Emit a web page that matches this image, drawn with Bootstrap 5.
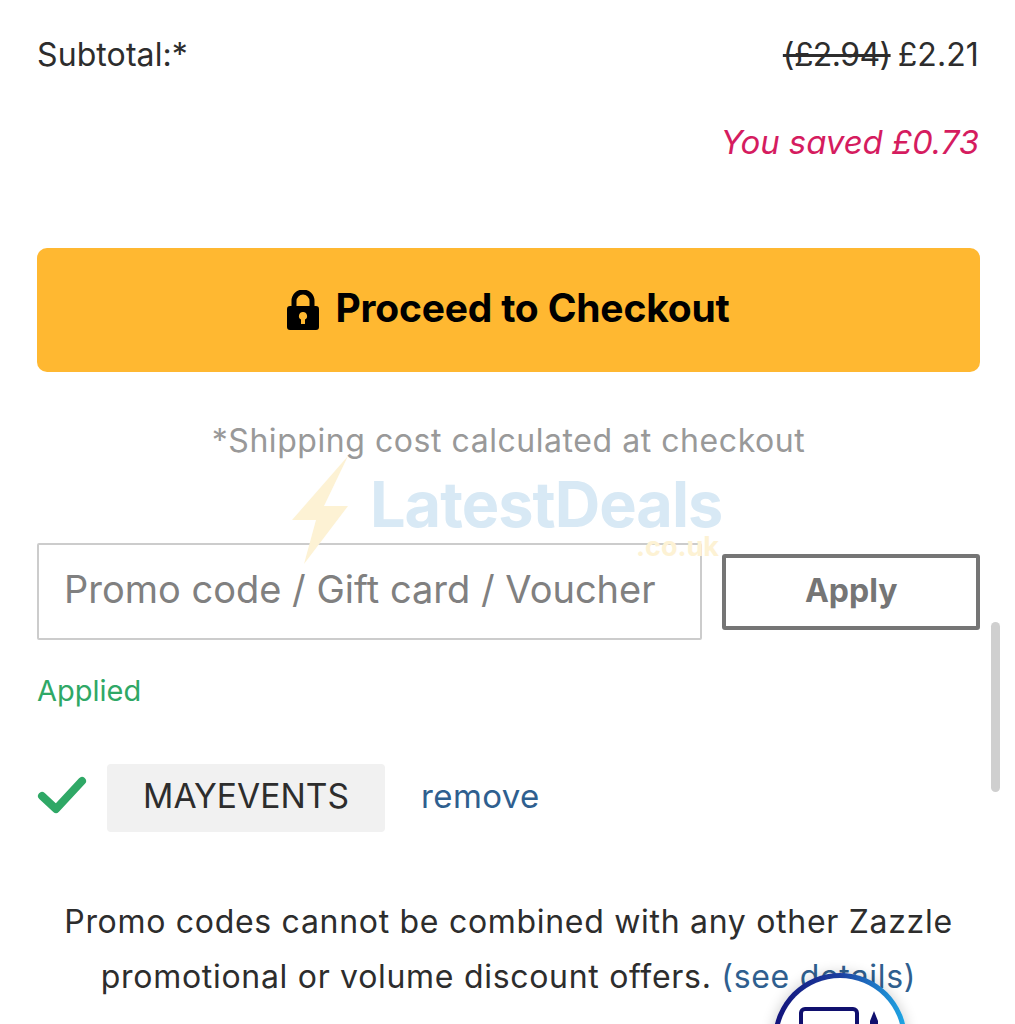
<!DOCTYPE html>
<html lang="en">
<head>
  <meta charset="UTF-8" />
  <meta name="viewport" content="width=device-width, initial-scale=1" />
  <title>Cart summary</title>
  <link href="https://cdn.jsdelivr.net/npm/bootstrap@5.3.0/dist/css/bootstrap.min.css" rel="stylesheet" />
  <style>
    html, body { height: 1024px; overflow: hidden; }
    body { font-family: "Inter", "Liberation Sans", sans-serif; color: #2d2d2d; background: #fff; font-size: 32px; }
    .cart-wrap { padding: 34px 35px 0 37px; width: 1015px; height: 1024px; position: relative; overflow: hidden; }
    .sum-row { line-height: 42px; letter-spacing: .1px; margin-right: 1px; }
    .old-price { text-decoration: line-through; letter-spacing: -.6px; margin-right: -2px; }
    .saved-line { color: #d51c5f; font-size: 33px; font-style: italic; margin-top: 45px; margin-right: 1px; line-height: 42px; text-align: right; letter-spacing: -.1px; }
    .checkout-btn { height: 124px; margin-top: 85px; background: #ffb831; border: 0; border-radius: 10px; color: #000; font-weight: 700; font-size: 39px; letter-spacing: -.2px; }
    .checkout-btn:hover, .checkout-btn:active { background: #ffb831; color: #000; }
    .checkout-label { padding-bottom: 4px; }
    .ship-note { color: #999; font-size: 32px; text-align: center; line-height: 40px; margin-top: 49px; letter-spacing: .55px; }
    .promo-row { margin-top: 82px; gap: 20px; }
    .promo-input { width: 666px; height: 97px; border: 2px solid #ccc; border-radius: 2px; font-size: 38px; padding: 0 25px 5px; color: #777; }
    .promo-input::placeholder { color: #808080; opacity: 1; }
    .apply-btn { width: 258px; height: 76px; border: 4px solid #757575; border-radius: 3px; background: #fff; color: #757575; font-weight: 700; font-size: 32px; padding: 0 0 2px; }
    .applied-label { color: #2fa866; font-size: 29px; line-height: 36px; margin-top: 33px; }
    .code-row { margin-top: 55px; }
    .check-icon { margin-bottom: 6px; }
    .code-chip { background: #f1f1f1; border-radius: 4px; width: 278px; height: 68px; margin-left: 20px; padding-bottom: 3px; font-size: 33.600px; color: #2d2d2d; }
    .remove-link { color: #2f5f8f; margin: 0 0 2px 36px; text-decoration: none; font-size: 33px; letter-spacing: .4px; }
    .promo-terms { text-align: center; font-size: 32px; line-height: 55px; margin-top: 62px; letter-spacing: .7px; }
    .promo-terms a { color: #2f5f8f; text-decoration: none; }
    .wm-logo { position: absolute; left: 292px; top: 456px; width: 440px; height: 110px; pointer-events: none; }
    .wm-name { position: absolute; left: 78px; top: 20px; font-size: 63px; line-height: 56px; font-weight: 700; color: #d8e9f5; letter-spacing: -1px; }
    .wm-tld { position: absolute; left: 344px; top: 77px; font-size: 27px; line-height: 28px; color: #fdf2d4; font-weight: 700; }
    .scroll-thumb { position: absolute; left: 991px; top: 622px; width: 9px; height: 170px; background: #cfcfcf; border-radius: 5px; }
    .chat-fab { position: absolute; left: 773px; top: 973px; width: 134px; height: 134px; border-radius: 50%; padding: 5px; background: linear-gradient(90deg, #12127a 0%, #1c3fa0 50%, #1fa9e6 100%); box-shadow: 0 0 14px rgba(0,0,0,.2); }
    .chat-inner { background: #fff; border-radius: 50%; width: 100%; height: 100%; padding: 29px 0 0 16px; }
    .chat-inner svg { display: block; }
  </style>
</head>
<body>
  <div class="cart-wrap">

    <div class="sum-row d-flex justify-content-between">
      <span>Subtotal:*</span>
      <span><span class="old-price">(£2.94)</span> £2.21</span>
    </div>
    <div class="saved-line">You saved £0.73</div>

    <button class="btn checkout-btn w-100 d-flex align-items-center justify-content-center gap-3" type="button">
      <svg width="32" height="40" viewBox="0 0 32 40" aria-hidden="true">
        <path d="M7 17V11a9 9 0 0 1 18 0v6" fill="none" stroke="#000" stroke-width="5"/>
        <path fill="#000" fill-rule="evenodd" d="M3 16h26a3 3 0 0 1 3 3v18a3 3 0 0 1-3 3H3a3 3 0 0 1-3-3V19a3 3 0 0 1 3-3zm13 6a4 4 0 0 0-2 7.500V34h4v-4.500A4 4 0 0 0 16 22z"/>
      </svg>
      <span class="checkout-label">Proceed to Checkout</span>
    </button>

    <div class="ship-note">*Shipping cost calculated at checkout</div>

    <div class="promo-row d-flex align-items-center">
      <input class="form-control promo-input" type="text" placeholder="Promo code / Gift card / Voucher" />
      <button class="btn apply-btn" type="button">Apply</button>
    </div>

    <div class="applied-label">Applied</div>

    <div class="code-row d-flex align-items-center">
      <svg class="check-icon" width="50" height="38" viewBox="0 0 50 38" aria-hidden="true">
        <path d="M5 20l14 13L45 5" fill="none" stroke="#2fa866" stroke-width="8" stroke-linecap="round" stroke-linejoin="round"/>
      </svg>
      <div class="code-chip d-flex align-items-center justify-content-center">MAYEVENTS</div>
      <a class="remove-link" href="#">remove</a>
    </div>

    <p class="promo-terms mb-0">Promo codes cannot be combined with any other Zazzle<br />promotional or volume discount offers. <a href="#">(see details)</a></p>

    <!-- things that sit over the page -->
    <div class="wm-logo">
      <svg width="58" height="108" viewBox="0 0 58 108" aria-hidden="true">
        <path fill="#fdf2d4" d="M56 0L0 64h24L12 108l44-58H32z"/>
      </svg>
      <span class="wm-name">LatestDeals</span>
      <span class="wm-tld">.co.uk</span>
    </div>
    <div class="scroll-thumb"></div>
    <div class="chat-fab">
      <div class="chat-inner">
        <svg width="90" height="40" viewBox="0 0 90 40" aria-hidden="true">
          <rect x="7" y="2" width="56" height="50" rx="4" fill="none" stroke="#10106e" stroke-width="4"/>
          <path fill="#10106e" d="M76 14l4-10 4 10v26h-8z"/>
        </svg>
      </div>
    </div>
  </div>

  <script src="https://cdn.jsdelivr.net/npm/bootstrap@5.3.0/dist/js/bootstrap.bundle.min.js"></script>
</body>
</html>
